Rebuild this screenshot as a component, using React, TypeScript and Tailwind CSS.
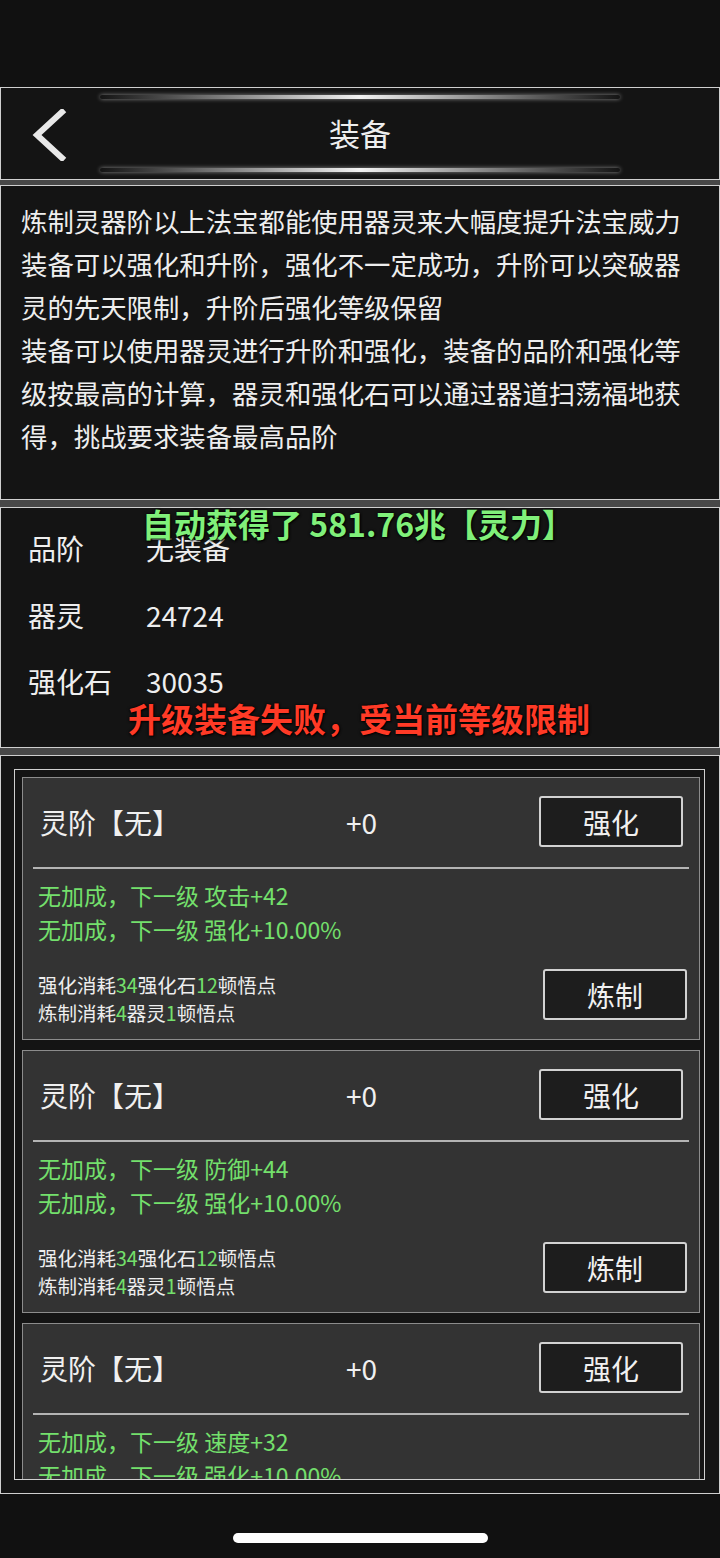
import React from 'react'

const FONT = { fontFamily: '"Noto Sans CJK SC", "Noto Sans", sans-serif' }

type Card = { stat: string }

const CARDS: Card[] = [{ stat: '攻击+42' }, { stat: '防御+44' }, { stat: '速度+32' }]

function GlowLine() {
  return (
    <div className="mx-auto h-[4px] w-[520px] rounded-full bg-gradient-to-r from-transparent via-[#f2f2f2] to-transparent shadow-[0_0_4px_rgba(255,255,255,0.5)]" />
  )
}

function Header() {
  return (
    <div className="relative flex h-[93px] flex-col justify-between border border-[#cfcfcf] bg-[#141414] py-[7px]">
      <GlowLine />
      <div className="-mt-[3px] flex items-center justify-center text-[31px] leading-none text-[#eeeeee]">装备</div>
      <GlowLine />
      {/* back chevron */}
      <svg className="absolute left-[28px] top-[21px]" width="40" height="52" viewBox="0 0 40 52">
        <path d="M33 3 L8 26 L33 49" fill="none" stroke="#e8e8e8" strokeWidth="6" strokeLinecap="square" />
      </svg>
    </div>
  )
}

function Description() {
  return (
    <div className="h-[315px] border border-[#cfcfcf] bg-[#141414] pl-[20px] pr-[20px] pt-[13px] text-[26.4px] leading-[43px] text-[#eeeeee]">
      <p>炼制灵器阶以上法宝都能使用器灵来大幅度提升法宝威力</p>
      <p>装备可以强化和升阶，强化不一定成功，升阶可以突破器灵的先天限制，升阶后强化等级保留</p>
      <p>装备可以使用器灵进行升阶和强化，装备的品阶和强化等级按最高的计算，器灵和强化石可以通过器道扫荡福地获得，挑战要求装备最高品阶</p>
    </div>
  )
}

function Stats() {
  const rows = [
    ['品阶', '无装备'],
    ['器灵', '24724'],
    ['强化石', '30035'],
  ]
  return (
    <div className="relative h-[241px] border border-[#cfcfcf] bg-[#141414] pl-[27px] pt-[7px] text-[28px] text-[#eeeeee]">
      {rows.map(([k, v]) => (
        <div key={k} className="flex h-[66.5px] items-center">
          <span className="w-[118px]">{k}</span>
          <span>{v}</span>
        </div>
      ))}
      {/* toasts */}
      <div className="absolute left-[141px] top-[-9px] text-[32px] font-semibold text-[#80f07a] [text-shadow:0_0_3px_#000,1px_1px_2px_#000]">
        自动获得了 581.76兆【灵力】
      </div>
      <div className="absolute left-[127px] top-[186px] text-[33px] font-semibold text-[#ff3a26] [text-shadow:0_0_3px_#000,1px_1px_2px_#000]">
        升级装备失败，受当前等级限制
      </div>
    </div>
  )
}

function Btn({ label, className = '' }: { label: string; className?: string }) {
  return (
    <div
      className={`flex h-[51px] w-[144px] items-center justify-center rounded-[3px] border-2 border-[#d2d2d2] bg-[#1d1d1d] text-[28px] text-[#f0f0f0] ${className}`}
    >
      {label}
    </div>
  )
}

function EquipCard({ stat }: Card) {
  return (
    <div className="h-[263px] shrink-0 border border-[#8c8c8c] bg-[#333333]">
      <div className="grid grid-cols-3 items-center pl-[17px] pr-[16px] pt-[18px]">
        <span className="text-[28px] text-[#f0f0f0]">灵阶【无】</span>
        <span className="text-center text-[28px] text-[#f0f0f0]">+0</span>
        <div className="flex justify-end">
          <Btn label="强化" />
        </div>
      </div>
      <div className="mx-[10px] mt-[20px] h-[2px] bg-[#b4b4b4]" />
      <div className="mt-[9px] pl-[15px] text-[23px] leading-[34px] text-[#74e06c]">
        <p>无加成，下一级 {stat}</p>
        <p>无加成，下一级 强化+10.00%</p>
      </div>
      <div className="mt-[23px] flex items-start justify-between pl-[15px] pr-[12px]">
        <div className="mt-[2px] text-[19.5px] leading-[28px] text-[#eeeeee]">
          <p>
            强化消耗<span className="text-[#74e06c]">34</span>强化石<span className="text-[#74e06c]">12</span>顿悟点
          </p>
          <p>
            炼制消耗<span className="text-[#74e06c]">4</span>器灵<span className="text-[#74e06c]">1</span>顿悟点
          </p>
        </div>
        <Btn label="炼制" />
      </div>
    </div>
  )
}

function EquipList() {
  return (
    <div className="h-[739px] border border-[#cfcfcf] bg-[#141414] pb-[13px] pl-[13px] pr-[14px] pt-[13px]">
      <div className="flex h-full flex-col gap-[10px] overflow-hidden border border-[#cfcfcf] pl-[7px] pr-[4px] pt-[7px]">
        {CARDS.map((c) => (
          <EquipCard key={c.stat} stat={c.stat} />
        ))}
      </div>
    </div>
  )
}

export default function App() {
  return (
    <div className="flex h-[1558px] w-[720px] flex-col bg-[#111111]" style={FONT}>
      {/* status bar area */}
      <div className="h-[87px] shrink-0" />

      <div className="flex flex-col bg-[#484848]">
        <Header />
        <div className="mt-[5px]">
          <Description />
        </div>
        <div className="mt-[7px]">
          <Stats />
        </div>
        <div className="mt-[7px]">
          <EquipList />
        </div>
      </div>

      {/* home indicator */}
      <div className="flex flex-1 items-end justify-center pb-[15px]">
        <div className="h-[10px] w-[255px] rounded-full bg-white" />
      </div>
    </div>
  )
}
